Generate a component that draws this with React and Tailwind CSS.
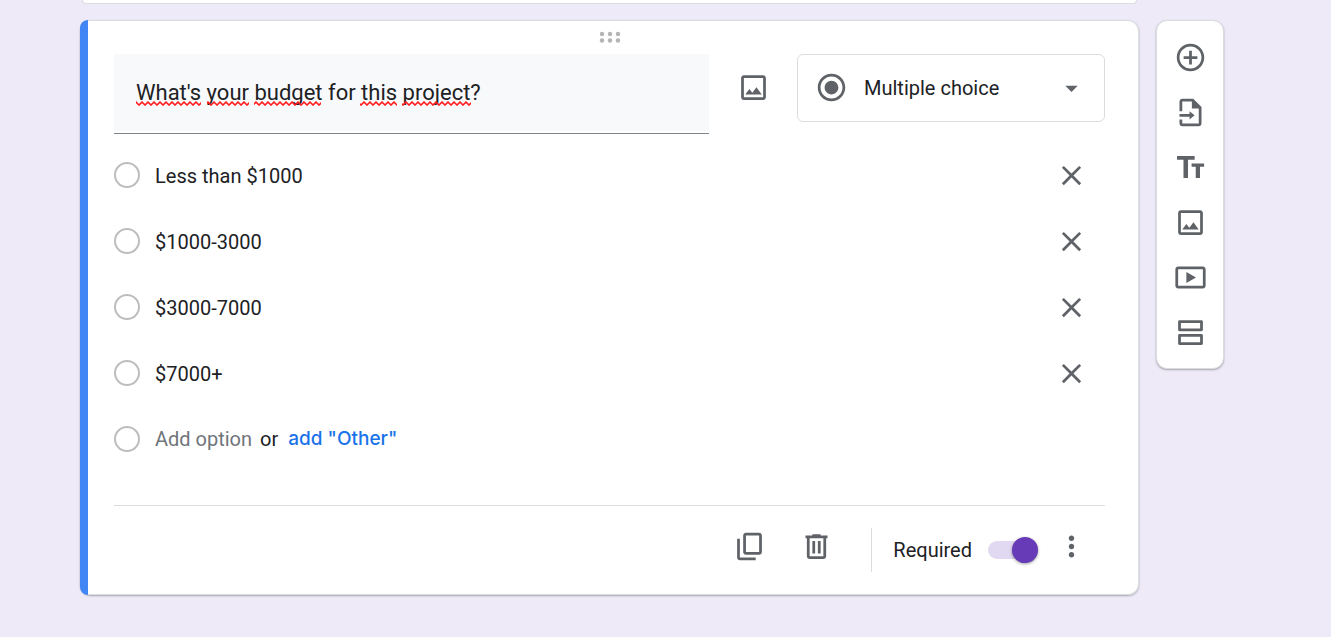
import { useState } from 'react';
import { clsx } from 'clsx';

const paths = {
  image:
    'M19 5v14H5V5h14m0-2H5c-1.1 0-2 .9-2 2v14c0 1.1.9 2 2 2h14c1.1 0 2-.9 2-2V5c0-1.1-.9-2-2-2zm-4.86 8.86l-3 3.87L9 13.14 6 17h12l-3.86-5.14z',
  radio:
    'M12 7c-2.76 0-5 2.24-5 5s2.24 5 5 5 5-2.24 5-5-2.24-5-5-5zm0-5C6.48 2 2 6.48 2 12s4.48 10 10 10 10-4.48 10-10S17.52 2 12 2zm0 18c-4.42 0-8-3.58-8-8s3.58-8 8-8 8 3.58 8 8-3.58 8-8 8z',
  caret: 'M7.5 10l4.5 4.5 4.5-4.5z',
  close:
    'M19 6.41L17.59 5 12 10.59 6.41 5 5 6.41 10.59 12 5 17.59 6.41 19 12 13.41 17.59 19 19 17.59 13.41 12z',
  add: 'M13 7h-2v4H7v2h4v4h2v-4h4v-2h-4V7zm-1-5C6.48 2 2 6.48 2 12s4.48 10 10 10 10-4.48 10-10S17.52 2 12 2zm0 18c-4.41 0-8-3.59-8-8s3.59-8 8-8 8 3.59 8 8-3.59 8-8 8z',
  importFile:
    'M14 2H6c-1.1 0-2 .9-2 2v7h2V4h7v5h5v11H6v-3H4v3c0 1.1.9 2 2 2h12c1.1 0 2-.9 2-2V8l-6-6zM4 13h7.3v-2L15 14l-3.7 3v-2H4z',
  title:
    'M2.2 3.6v2.7h4.7v13.4h3.3V6.3h4.8V3.6zM21.9 9.1h-9.1v2.4h3v8.2h3.1v-8.2h3z',
  video:
    'M21 4H3c-1.1 0-2 .9-2 2v12c0 1.1.9 2 2 2h18c1.1 0 2-.9 2-2V6c0-1.1-.9-2-2-2zm0 14H3V6h18v12zM9 8v8l7-4z',
  section:
    'M20 13H4c-.55 0-1 .45-1 1v6c0 .55.45 1 1 1h16c.55 0 1-.45 1-1v-6c0-.55-.45-1-1-1zm-1 6H5v-4h14v4zM20 3H4c-.55 0-1 .45-1 1v6c0 .55.45 1 1 1h16c.55 0 1-.45 1-1V4c0-.55-.45-1-1-1zm-1 6H5V5h14v4z',
  copy: 'M19 2H9.4c-1.1 0-2 .9-2 2v12c0 1.1.9 2 2 2H19c1.1 0 2-.9 2-2V4c0-1.1-.9-2-2-2zm0 14H9.4V4H19v12zM5 6.3H3V20c0 1.1.9 2 2 2h11.5v-2H5z',
  trash:
    'M15 4V3H9v1H4v2h1v13c0 1.1.9 2 2 2h10c1.1 0 2-.9 2-2V6h1V4h-5zm2 15H7V6h10v13zM9 8h2v9H9zM13 8h2v9h-2z',
  more: 'M12 8c1.1 0 2-.9 2-2s-.9-2-2-2-2 .9-2 2 .9 2 2 2zm0 2c-1.1 0-2 .9-2 2s.9 2 2 2 2-.9 2-2-.9-2-2-2zm0 6c-1.1 0-2 .9-2 2s.9 2 2 2 2-.9 2-2-.9-2-2-2z',
};

const tools = [
  { name: 'Add question', icon: 'add' },
  { name: 'Import questions', icon: 'importFile' },
  { name: 'Add title and description', icon: 'title' },
  { name: 'Add image', icon: 'image' },
  { name: 'Add video', icon: 'video' },
  { name: 'Add section', icon: 'section' },
];

// [start, width] of each flagged word in the question
const misspelled = [
  [0, 65],
  [71, 42],
  [118, 67],
  [224, 37],
  [266, 69],
];

function Icon({ name }) {
  return (
    <svg viewBox="0 0 24 24" className="size-[33px] shrink-0 fill-current" aria-hidden="true">
      <path fillRule="evenodd" d={paths[name]} />
    </svg>
  );
}

function IconButton({ icon, label, className }) {
  return (
    <button
      type="button"
      aria-label={label}
      className={clsx('flex shrink-0 items-center justify-center text-[#5f6368]', className)}
    >
      <Icon name={icon} />
    </button>
  );
}

function SpellingMarks() {
  return (
    <svg className="pointer-events-none absolute top-[47px] left-[22px] h-[5px] w-[340px]" aria-hidden="true">
      <defs>
        <pattern id="squiggle" width="6" height="5" patternUnits="userSpaceOnUse">
          <path d="M-1 0L0 1L3 4L6 1L7 0" fill="none" stroke="#ff1f1f" strokeWidth="1.6" />
        </pattern>
      </defs>
      {misspelled.map(([x, width]) => (
        <rect key={x} x={x} width={width} height="5" fill="url(#squiggle)" />
      ))}
    </svg>
  );
}

function Circle() {
  return <span className="size-[26px] shrink-0 rounded-full border-2 border-[#bdbdbd]" />;
}

function QuestionCard() {
  const [question, setQuestion] = useState("What's your budget for this project?");
  const [options, setOptions] = useState(['Less than $1000', '$1000-3000', '$3000-7000', '$7000+']);
  const [required, setRequired] = useState(true);

  const editOption = (index, value) => {
    setOptions(options.map((option, i) => (i === index ? value : option)));
  };

  return (
    <section className="flex rounded-[11px] shadow-[0_1px_2px_rgba(60,64,67,0.4)]">
      <div className="w-2 shrink-0 rounded-l-[11px] bg-[#4285f4]" />
      <div className="min-w-0 flex-1 rounded-r-[11px] border border-l-0 border-[#dadce0] bg-white pr-[33px] pl-[26px]">
        <div className="flex h-[33px] items-center justify-center pb-0.5">
          <button type="button" aria-label="Move question" className="text-[#b4b4b4]">
            <svg viewBox="0 0 22 12" className="h-3 w-[22px] fill-current" aria-hidden="true">
              {[3, 11, 19].map((x) => (
                <g key={x}>
                  <circle cx={x} cy="3" r="2.2" />
                  <circle cx={x} cy="9.5" r="2.2" />
                </g>
              ))}
            </svg>
          </button>
        </div>

        <div className="flex items-start">
          <div className="relative min-w-0 flex-1 border-b border-[#80868b] pb-0.5">
            <input
              type="text"
              aria-label="Question"
              spellCheck={false}
              value={question}
              onChange={(e) => setQuestion(e.target.value)}
              className="block h-[77px] w-full bg-[#f8f9fb] px-[22px] text-[22px] text-[#202124] outline-none"
            />
            <SpellingMarks />
          </div>
          <IconButton icon="image" label="Add image to question" className="h-[66px] w-[88px]" />
          <div className="relative flex h-[68px] w-[308px] items-center rounded-md border border-[#dadce0] text-[#5f6368]">
            <span className="pointer-events-none absolute top-4 left-[17px]">
              <Icon name="radio" />
            </span>
            <select
              aria-label="Question type"
              className="h-full w-full appearance-none bg-transparent pl-[66px] text-[20px] text-[#202124] outline-none"
            >
              <option>Multiple choice</option>
              <option>Checkboxes</option>
              <option>Dropdown</option>
            </select>
            <span className="pointer-events-none absolute right-4">
              <Icon name="caret" />
            </span>
          </div>
        </div>

        <ul className="mt-2">
          {options.map((option, index) => (
            <li key={index} className="flex h-[66px] items-center">
              <Circle />
              <input
                type="text"
                aria-label={`Option ${index + 1}`}
                value={option}
                onChange={(e) => editOption(index, e.target.value)}
                className="ml-[15px] min-w-0 flex-1 pt-0.5 text-[20px] text-[#202124] outline-none"
              />
              <IconButton icon="close" label={`Remove option ${index + 1}`} className="h-full w-[67px]" />
            </li>
          ))}
          <li className="flex h-[66px] items-center text-[20px]">
            <Circle />
            <button type="button" className="ml-[15px] text-[#70757a]">
              Add option
            </button>
            <span className="ml-2 text-[#202124]">or</span>
            <button type="button" className="ml-2.5 font-[Inter,sans-serif] text-[19px] font-medium text-[#1a73e8]">
              add "Other"
            </button>
          </li>
        </ul>

        <div className="mt-[33px] flex items-start justify-end border-t border-[#dadce0] pt-[22px] pb-[22px]">
          <IconButton icon="copy" label="Duplicate" className="h-9 w-[67px]" />
          <IconButton icon="trash" label="Delete" className="h-9 w-[67px]" />
          <div className="mx-[21px] h-11 w-px bg-[#dadce0]" />
          <label className="flex h-11 items-center gap-4 text-[20px] text-[#202124]">
            Required
            <input
              type="checkbox"
              checked={required}
              onChange={(e) => setRequired(e.target.checked)}
              className="flex h-[18px] w-[50px] appearance-none items-center rounded-full bg-[#d5d5d5] before:size-[26px] before:shrink-0 before:rounded-full before:bg-white before:shadow-[0_1px_3px_rgba(0,0,0,0.4)] checked:justify-end checked:bg-[#e1d8f1] checked:before:bg-[#673ab7]"
            />
          </label>
          <IconButton icon="more" label="More options" className="h-9 w-[67px]" />
        </div>
      </div>
    </section>
  );
}

function Toolbar() {
  return (
    <aside className="flex flex-col rounded-[11px] border border-[#dadce0] bg-white pt-[9px] pb-2 shadow-[0_1px_2px_rgba(60,64,67,0.4)]">
      {tools.map((tool) => (
        <IconButton key={tool.name} icon={tool.icon} label={tool.name} className="h-[55px] w-full" />
      ))}
    </aside>
  );
}

export default function App() {
  return (
    <main className="min-h-screen bg-[#eeeaf8] pr-[107px] pl-20 font-[Roboto,sans-serif]">
      <div className="grid grid-cols-[minmax(0,1fr)_68px] items-start gap-x-[17px] gap-y-4">
        <div className="mx-0.5 h-1 rounded-b-[11px] border border-t-0 border-[#dadce0] bg-white" />
        <div />
        <QuestionCard />
        <Toolbar />
      </div>
    </main>
  );
}
